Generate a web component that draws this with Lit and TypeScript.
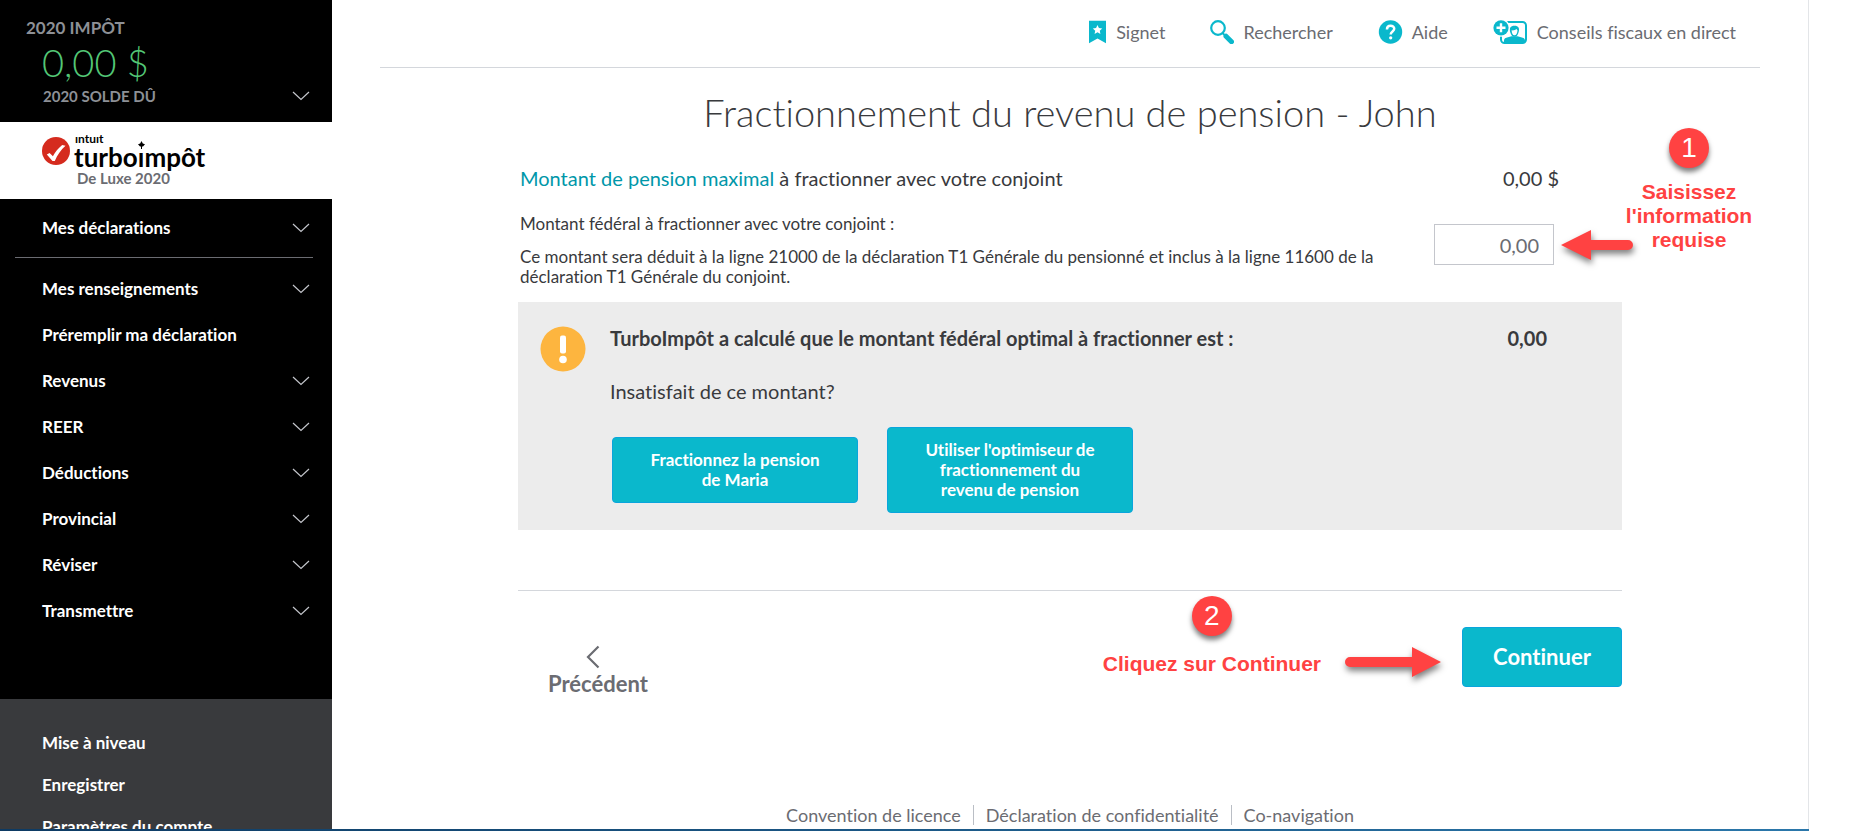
import { LitElement, html, css, svg } from "lit";
import { customElement } from "lit/decorators.js";

interface NavItem { label: string; expandable: boolean; }

const declarations: NavItem[] = [{ label: "Mes déclarations", expandable: true }];
const sections: NavItem[] = [
  { label: "Mes renseignements", expandable: true },
  { label: "Préremplir ma déclaration", expandable: false },
  { label: "Revenus", expandable: true },
  { label: "REER", expandable: true },
  { label: "Déductions", expandable: true },
  { label: "Provincial", expandable: true },
  { label: "Réviser", expandable: true },
  { label: "Transmettre", expandable: true },
];

const chevron = html`<svg class="chevron" width="18" height="10" viewBox="0 0 18 10" aria-hidden="true">
  <path d="M1 1l8 7.5L17 1" fill="none" stroke="#c4c6cc" stroke-width="1.2" /></svg>`;

@customElement("side-nav")
export class SideNav extends LitElement {
  static styles = css`
    :host { display: flex; flex-direction: column; width: 332px; flex: none; background: #000; color: #fff;
      font-weight: 700; font-size: 17px; line-height: 20px; }
    a, button { color: inherit; font: inherit; text-decoration: none; }
    button { background: none; border: 0; padding: 0; text-align: left; cursor: pointer; }
    .balance { display: grid; grid-template-columns: 1fr auto; align-items: center; color: #8d9096; padding: 18px 22px 16px 42px; }
    .year { grid-column: 1 / -1; margin-left: -16px; line-height: 20px; }
    .amount { grid-column: 1 / -1; color: #53c776; font-size: 38px; line-height: 48px; font-weight: 300; }
    .due { font-size: 15px; line-height: 20px; padding-left: 1px; }
    .brand { background: #fff; color: #6b6c72; display: grid; grid-template-columns: 28px auto; column-gap: 4px;
      justify-content: start; padding: 10px 0 11px 42px; }
    .mark { margin-top: 5px; }
    .words { display: flex; flex-direction: column; color: #000; }
    .intuit { font-size: 12px; line-height: 14px; padding-left: 1px; }
    .turbo { font-size: 26px; line-height: 22px; }
    .dotted { position: relative; }
    .leaf { position: absolute; left: 0; top: 0; }
    .edition { grid-column: 2; font-size: 15px; line-height: 20px; padding-left: 3px; }
    ul { list-style: none; margin: 0; padding: 0; }
    .item { display: flex; align-items: center; justify-content: space-between; width: 100%; box-sizing: border-box;
      height: 46px; padding: 0 22px 0 42px; }
    .first { margin: 6px 0; }
    hr { border: 0; border-top: 1px solid #6b6c72; margin: 0 19px 0 15px; }
    .main { padding-top: 8px; flex: 1 0 auto; }
    .extra { background: #393a3d; padding-top: 23px; }
    .main ul { padding-bottom: 65px; }
    .extra a { display: flex; align-items: center; height: 42px; padding-left: 42px; }
    .chevron { flex: none; }
  `;

  private items(list: NavItem[]) {
    return list.map((i) => html`<li>${i.expandable
      ? html`<button class="item" type="button" aria-expanded="false"><span>${i.label}</span>${chevron}</button>`
      : html`<a class="item" href="#">${i.label}</a>`}</li>`);
  }

  render() {
    return html`
      <button class="balance" type="button">
        <span class="year">2020 IMPÔT</span>
        <span class="amount">0,00 $</span>
        <span class="due">2020 SOLDE DÛ</span>${chevron}
      </button>
      <div class="brand">
        <svg class="mark" width="28" height="28" viewBox="0 0 28 28" aria-hidden="true">
          <circle cx="14" cy="14" r="14" fill="#d52b1e" />
          <path d="M4.800 17.500l2.800-1.600 3.300 3.300c2.500-4.600 5.500-8 9.300-11.200l3.300.8c-4.800 4.400-8 9-10.700 15.200h-2.300z" fill="#fff" />
        </svg>
        <div class="words">
          <span class="intuit">ıntuıt</span>
          <span class="turbo">turbo<span class="dotted">ı<svg class="leaf" width="7" height="8" viewBox="0 0 7 8" aria-hidden="true"><path d="M3.500 0l1.300 2.600L7 3.200 5 5.500H4V8H3V5.500H2L0 3.200l2.200-.6z" /></svg></span>mpôt</span>
        </div>
        <span class="edition">De Luxe 2020</span>
      </div>
      <ul class="first">${this.items(declarations)}</ul>
      <hr />
      <nav class="main"><ul>${this.items(sections)}</ul></nav>
      <nav class="extra">
        <a href="#">Mise à niveau</a><a href="#">Enregistrer</a><a href="#">Paramètres du compte</a>
      </nav>`;
  }
}

const star = svg`<path d="M9 4.500l1.500 3.300 3.500.4-2.600 2.400.7 3.500L9 12.300l-3.100 1.800.7-3.500L4 8.200l3.500-.4z" fill="#fff" />`;

@customElement("top-bar")
export class TopBar extends LitElement {
  static styles = css`
    :host { display: flex; justify-content: flex-end; gap: 45px; padding: 20px 24px 23px 0; border-bottom: 1px solid #d4d7dc; }
    a { display: flex; align-items: center; gap: 9px; color: #6b6c72; text-decoration: none; font-size: 18px; line-height: 24px; }
    .wide { gap: 10px; }
  `;
  render() {
    return html`
      <a class="wide" href="#"><svg width="17" height="24" viewBox="0 0 18 24"><path d="M0 0h18v24l-9-5-9 5z" fill="#0ab8cc" />${star}</svg>Signet</a>
      <a href="#"><svg width="24" height="24" viewBox="0 0 24 24"><circle cx="8" cy="8" r="6.800" fill="none" stroke="#0ab8cc" stroke-width="2.200" /><path d="M12.500 13l2 2M15.500 16l6 6" stroke="#0ab8cc" stroke-width="2" /><path d="M16 16.200l5.500 5.500" stroke="#0ab8cc" stroke-width="5" stroke-linecap="round" /></svg>Rechercher</a>
      <a href="#"><svg width="25" height="24" viewBox="0 0 25 25"><circle cx="12.500" cy="12.500" r="12.200" fill="#0ab8cc" /><path d="M8.800 9.800c0-5 7.600-4.700 7.600-.6 0 2.800-3.700 2.700-3.700 5.800" fill="none" stroke="#fff" stroke-width="2.600" /><circle cx="12.700" cy="18.500" r="1.700" fill="#fff" /></svg>Aide</a>
      <a class="wide" href="#"><svg width="34" height="24" viewBox="0 0 34 24"><rect x="8" y="2" width="25" height="21" rx="3.500" fill="#fff" stroke="#0ab8cc" stroke-width="2" /><path d="M11 22.500v-2c0-2 1.500-2.600 4-3.200l3.500-1h6l3.500 1c2.500.6 4 1.200 4 3.200v2z" fill="#0ab8cc" /><path d="M17.300 12.500c-1.500-4.500.3-6.800 4.200-6.800s5.500 2.300 4 6.800c-.7 2.700-2 4.300-4 4.300s-3.400-1.600-4.200-4.300z" fill="#0ab8cc" /><path d="M18.600 10.300c2 .3 3.800-.3 5-1.300.3.700.5 1 .9 1.300-.1 3-1.300 5-3 5s-2.800-2-2.900-5z" fill="#fff" /><circle cx="8" cy="7.800" r="9" fill="#fff" /><circle cx="8" cy="7.800" r="7.600" fill="#0ab8cc" /><path d="M8 3.300v9M3.500 7.800h9" stroke="#fff" stroke-width="2.400" /></svg>Conseils fiscaux en direct</a>`;
  }
}

@customElement("app-root")
export class AppRoot extends LitElement {
  static styles = css`
    :host { display: flex; flex-direction: column; height: 100vh; overflow: hidden; padding-right: 52px; box-sizing: border-box;
      background: #fff; color: #393a3d; font-family: Lato, "Noto Sans", sans-serif; font-size: 20px; line-height: 24px;
      font-variant-ligatures: none; }
    .shell { display: flex; flex: 1; min-height: 0; overflow: hidden; border-right: 1px solid #e3e5e8; box-sizing: border-box; }
    .strip { flex: none; height: 2px; background: linear-gradient(90deg, #0d3a63, #2b77aa); }
    main { flex: 1; display: flex; flex-direction: column; padding: 0 48px; min-width: 0; }
    .page { width: 80%; margin: 0 auto; flex: 1; display: flex; flex-direction: column; position: relative; }
    h1 { margin: 0; padding: 20px 0 0; font-weight: 300; font-size: 38px; line-height: 48px; text-align: center; }
    a { color: #0097a9; text-decoration: none; }
    .row { display: flex; justify-content: space-between; padding: 0 63px 0 2px; }
    .max { padding-top: 30px; }
    .federal { display: grid; grid-template-columns: 1fr 120px; column-gap: 30px; padding: 24px 68px 0 2px; }
    .federal label, .federal p { font-size: 17px; line-height: 20px; margin: 0; display: block; }
    .federal p { padding-top: 13px; }
    input { box-sizing: border-box; width: 120px; height: 41px; margin-top: 10px; border: 1px solid #c4c6cc; background: #fff;
      font: inherit; color: #6b6c72; text-align: right; padding: 0 14px; border-radius: 0; }
    .panel { background: #ececec; margin-top: 15px; padding: 24px 75px 17px 22px; display: grid; grid-template-columns: 46px 1fr; column-gap: 24px; }
    .best { display: flex; justify-content: space-between; font-weight: 700; }
    .panel p { margin: 0; padding-top: 29px; }
    .choices { display: flex; align-items: center; gap: 29px; padding: 24px 0 0 2px; }
    .btn { background: #0ab8cc; color: #fff; border: 1px solid #0aa5dc; border-radius: 4px; font: inherit; font-weight: 700; cursor: pointer; }
    .choice { width: 246px; padding: 12px 30px; font-size: 17px; line-height: 20px; }
    .actions { margin-top: 60px; border-top: 1px solid #d4d7dc; display: flex; justify-content: space-between; align-items: flex-start; padding-top: 36px; }
    .next { width: 160px; height: 60px; font-size: 22px; }
    .prev { display: flex; flex-direction: column; align-items: center; gap: 3px; background: none; border: 0; font: inherit; font-weight: 700;
      color: #6b6c72; font-size: 22px; line-height: 24px; padding: 18px 30px 0; cursor: pointer; }
    footer { margin-top: auto; display: flex; justify-content: center; padding-bottom: 4px; font-size: 18px; line-height: 20px; }
    footer a { color: #6b6c72; padding: 0 12px; }
    footer a + a { border-left: 1px solid #babec5; }
    .note { position: absolute; display: flex; flex-direction: column; align-items: center; color: #ff4242;
      font: 700 21px/24px "Liberation Sans", Arial, sans-serif; text-align: center; }
    .badge { width: 40px; height: 40px; border-radius: 50%; background: #ff4242; color: #fff; font-weight: 400; font-size: 28px; line-height: 40px;
      box-shadow: 0 4px 5px rgba(0, 0, 0, 0.5); }
    .one { left: calc(100% + 3px); top: 60px; width: 128px; gap: 12px; }
    .two { right: 301px; top: 528px; gap: 16px; }
    .arrow { position: absolute; filter: drop-shadow(1px 4px 3px rgba(0, 0, 0, 0.5)); overflow: visible; }
    .left { right: -11px; top: 162px; }
    .right { right: 181px; top: 579px; }
  `;

  render() {
    return html`
      <div class="shell">
        <side-nav></side-nav>
        <main>
          <top-bar></top-bar>
          <div class="page">
            <h1>Fractionnement du revenu de pension - John</h1>
            <div class="row max">
              <span><a href="#">Montant de pension maximal</a> à fractionner avec votre conjoint</span>
              <span>0,00 $</span>
            </div>
            <div class="federal">
              <div>
                <label for="federal-amount">Montant fédéral à fractionner avec votre conjoint :</label>
                <p>Ce montant sera déduit à la ligne 21000 de la déclaration T1 Générale du pensionné et inclus à la ligne 11600 de la déclaration T1 Générale du conjoint.</p>
              </div>
              <input id="federal-amount" type="text" inputmode="decimal" value="0,00" />
            </div>
            <section class="panel">
              <svg width="46" height="46" viewBox="0 0 46 46" aria-hidden="true"><circle cx="23" cy="23" r="22.500" fill="#fdb53f" /><rect x="20" y="9.500" width="6" height="18" rx="2" fill="#fff" /><circle cx="23" cy="33.500" r="3.800" fill="#fff" /></svg>
              <div>
                <div class="best"><span>TurboImpôt a calculé que le montant fédéral optimal à fractionner est :</span><span>0,00</span></div>
                <p>Insatisfait de ce montant?</p>
                <div class="choices">
                  <button class="btn choice" type="button">Fractionnez la pension de Maria</button>
                  <button class="btn choice" type="button">Utiliser l'optimiseur de fractionnement du revenu de pension</button>
                </div>
              </div>
            </section>
            <div class="actions">
              <button class="prev" type="button"><svg width="24" height="24" viewBox="0 0 24 24" aria-hidden="true"><path d="M12.500 1.500L2 12l10.500 10.500" fill="none" stroke="#6b6c72" stroke-width="2.200" /></svg>Précédent</button>
              <button class="btn next" type="button">Continuer</button>
            </div>
            <footer><a href="#">Convention de licence</a><a href="#">Déclaration de confidentialité</a><a href="#">Co-navigation</a></footer>
            <div class="note one"><span class="badge">1</span><span>Saisissez l'information requise</span></div>
            <svg class="arrow left" width="72" height="30" viewBox="0 0 72 30" aria-hidden="true"><path d="M0 15L30 0v10h37a5 5 0 0 1 0 10H30v10z" fill="#ff4242" /></svg>
            <div class="note two"><span class="badge">2</span><span>Cliquez sur Continuer</span></div>
            <svg class="arrow right" width="96" height="30" viewBox="0 0 96 30" aria-hidden="true"><path d="M96 15L67 0v10H5a5 5 0 0 0 0 10h62v10z" fill="#ff4242" /></svg>
          </div>
        </main>
      </div>
      <div class="strip"></div>`;
  }
}
